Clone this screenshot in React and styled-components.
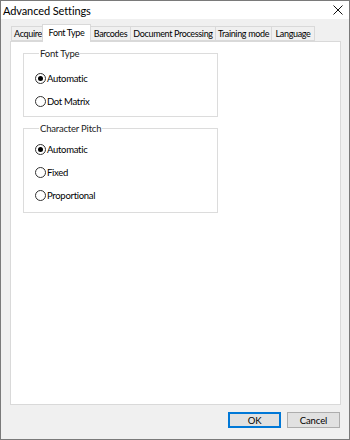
import React from "react";
import styled, { createGlobalStyle } from "styled-components";

const Global = createGlobalStyle`
  html, body { margin: 0; padding: 0; }
  body {
    width: 350px;
    height: 440px;
    overflow: hidden;
    font-family: Lato, "Open Sans", sans-serif;
    font-size: 11px;
    color: #000;
  }
`;

const Window = styled.div`
  box-sizing: border-box;
  width: 350px;
  height: 440px;
  border: 1px solid #7a7a7a;
  background: #f0f0f0;
  display: flex;
  flex-direction: column;
`;

const TitleBar = styled.div`
  height: 18px;
  background: #fff;
  display: flex;
  align-items: center;
  justify-content: space-between;
  padding: 0 6px 0 2px;
  font-size: 11px;
  letter-spacing: -0.1px;
`;

const Body = styled.div`
  flex: 1;
  display: flex;
  flex-direction: column;
  padding: 5px 8px 0 9px;
`;

const TabStrip = styled.div`
  display: flex;
  align-items: flex-end;
  height: 17px;
  padding-left: 1px;
  position: relative;
  z-index: 1;
`;

const Tab = styled.div`
  box-sizing: border-box;
  width: ${(p) => p.$w}px;
  height: ${(p) => (p.$active ? "18px" : "15px")};
  margin: ${(p) => (p.$active ? "0 -1px -1px -2px" : "0 -1px 0 0")};
  border: 1px solid #d9d9d9;
  border-bottom: ${(p) => (p.$active ? "none" : "1px solid #d9d9d9")};
  background: ${(p) => (p.$active ? "#fff" : "#f0f0f0")};
  display: flex;
  align-items: center;
  justify-content: center;
  padding-bottom: ${(p) => (p.$active ? "2px" : "0")};
  font-size: 9px;
  letter-spacing: -0.35px;
  white-space: nowrap;
  position: relative;
  z-index: ${(p) => (p.$active ? 2 : 1)};
`;

const Panel = styled.div`
  box-sizing: border-box;
  height: 364px;
  background: #fff;
  border: 1px solid #d9d9d9;
  padding: 6px 0 0 12px;
  display: flex;
  flex-direction: column;
  gap: 6px;
`;

const Group = styled.fieldset`
  box-sizing: border-box;
  width: 195px;
  height: ${(p) => p.$h}px;
  margin: 0;
  border: 1px solid #dcdcdc;
  padding: ${(p) => p.$pt}px 0 0 11px;
  display: flex;
  flex-direction: column;
  gap: 5px;
`;

const Legend = styled.legend`
  padding: 0 1px;
  margin-left: 4px;
  font-size: 9.5px;
  letter-spacing: -0.2px;
  color: #222;
`;

const Option = styled.div`
  height: 18px;
  display: flex;
  align-items: center;
  gap: 1px;
  font-size: 9.5px;
  letter-spacing: -0.3px;
`;

const Dot = styled.span`
  box-sizing: border-box;
  width: 11px;
  height: 11px;
  border-radius: 50%;
  border: 1px solid #333;
  background: #fff;
  display: flex;
  align-items: center;
  justify-content: center;
  &::after {
    content: "";
    width: 5px;
    height: 5px;
    border-radius: 50%;
    background: ${(p) => (p.$on ? "#000" : "transparent")};
  }
`;

const Footer = styled.div`
  display: flex;
  justify-content: flex-end;
  gap: 6px;
  padding: 7px 1px 0 0;
`;

const Button = styled.div`
  box-sizing: border-box;
  width: 53px;
  height: 16px;
  background: #e1e1e1;
  border: 1px solid ${(p) => (p.$primary ? "#0078d7" : "#adadad")};
  box-shadow: ${(p) => (p.$primary ? "inset 0 0 0 1px #0078d7" : "none")};
  display: flex;
  align-items: center;
  justify-content: center;
  font-size: 9.5px;
  letter-spacing: -0.1px;
`;

const Radio = ({ on, children }) => (
  <Option>
    <Dot $on={on} />
    {children}
  </Option>
);

const tabs = [
  ["Acquire", 34],
  ["Font Type", 49],
  ["Barcodes", 41],
  ["Document Processing", 86],
  ["Training mode", 57],
  ["Language", 44],
];

export default function App() {
  return (
    <>
      <Global />
      <Window>
        <TitleBar>
          <span>Advanced Settings</span>
          <svg width="10" height="10" viewBox="0 0 10 10">
            <path d="M0.5 0.5 L9.5 9.5 M9.5 0.5 L0.5 9.5" stroke="#111" strokeWidth="1" />
          </svg>
        </TitleBar>
        <Body>
          <TabStrip>
            {tabs.map(([t, w]) => (
              <Tab key={t} $w={w} $active={t === "Font Type"}>
                {t}
              </Tab>
            ))}
          </TabStrip>
          <Panel>
            <Group $h={69} $pt={10}>
              <Legend>Font Type</Legend>
              <Radio on>Automatic</Radio>
              <Radio>Dot Matrix</Radio>
            </Group>
            <Group $h={90} $pt={6}>
              <Legend>Character Pitch</Legend>
              <Radio on>Automatic</Radio>
              <Radio>Fixed</Radio>
              <Radio>Proportional</Radio>
            </Group>
          </Panel>
          <Footer>
            <Button $primary>OK</Button>
            <Button>Cancel</Button>
          </Footer>
        </Body>
      </Window>
    </>
  );
}
